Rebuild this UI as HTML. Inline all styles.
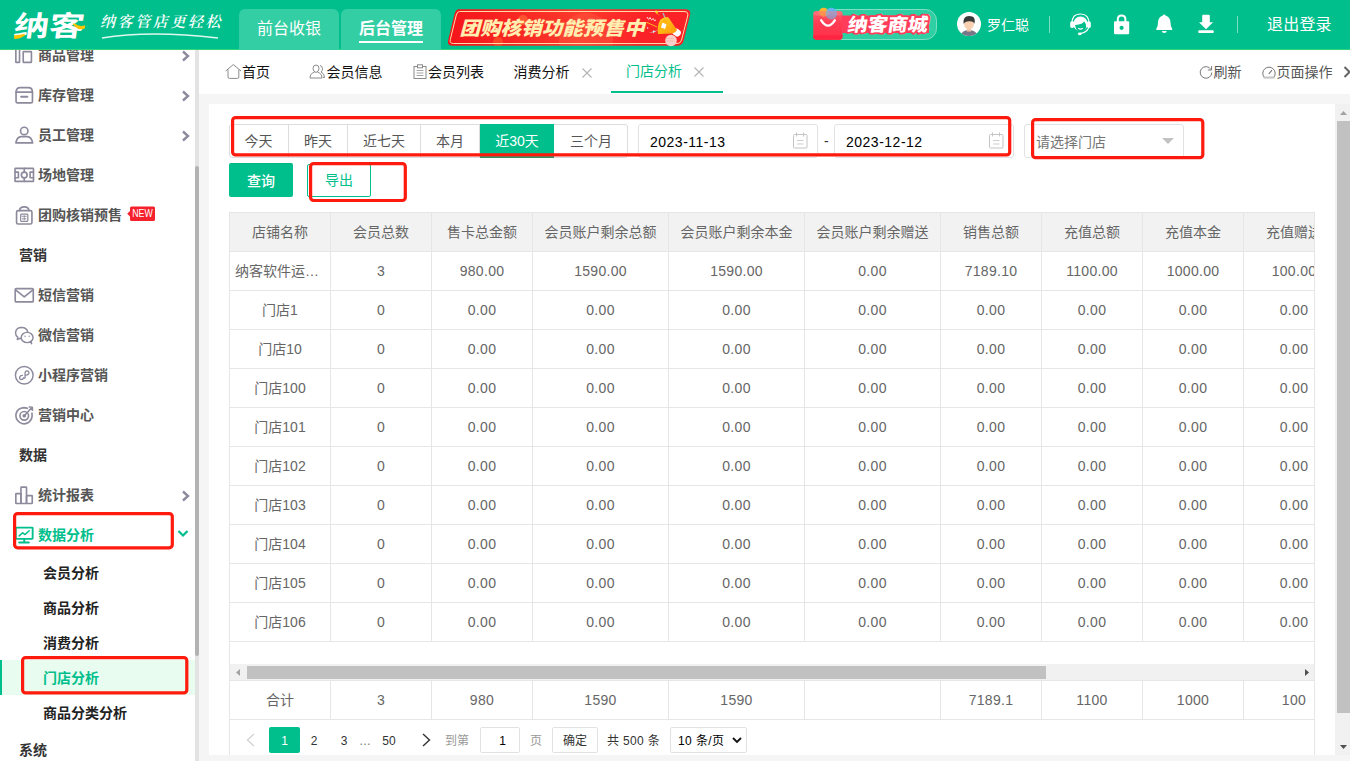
<!DOCTYPE html>
<html lang="zh-CN">
<head>
<meta charset="utf-8">
<title>门店分析</title>
<style>
*{box-sizing:border-box;margin:0;padding:0}
html,body{width:1350px;height:761px;overflow:hidden}
body{font-family:"Liberation Sans","Noto Sans CJK SC",sans-serif;font-size:14px;color:#333;background:#f5f5f5;position:relative}
.abs{position:absolute}
svg{display:block;overflow:visible}
#hd{position:absolute;left:0;top:0;width:1350px;height:50px;background:#00bf8c;border-bottom:1px solid #2fd47c}
.htab{position:absolute;top:9px;width:100px;height:41px;background:#33cea4;border-radius:6px 6px 0 0;color:#fff;font-size:16px;text-align:center;line-height:40px}
#sb{position:absolute;left:0;top:50px;width:195px;height:711px;background:#fff;overflow:hidden}
#sbtrack{position:absolute;left:195px;top:50px;width:4px;height:711px;background:#e3e3e3}
#sbthumb{position:absolute;left:195px;top:166px;width:4px;height:490px;background:#b2b2b2;border-radius:2px}
.mi{position:absolute;left:0;width:195px;height:40px;line-height:40px;font-weight:700;color:#555;font-size:14px}
.mi .t{position:absolute;left:38px;top:0;white-space:nowrap}
.mi .ic{position:absolute;left:13.800px;top:10px;width:20.5px;height:20.5px}
.mi .ar{position:absolute;left:180.5px;top:15px;width:9px;height:12px}
.st{position:absolute;left:19px;height:40px;line-height:40px;font-weight:700;color:#333;font-size:14px}
.si{position:absolute;left:0;width:195px;height:35px;line-height:37px;font-weight:700;color:#222;font-size:14px;padding-left:43px}
.red{position:absolute}
#tb{position:absolute;left:199px;top:50px;width:1151px;height:44px;background:#fff}
.ti{position:absolute;top:50px;height:44px;line-height:44px;font-size:14px;color:#111;white-space:nowrap}
#card{position:absolute;left:209px;top:104px;width:1126px;height:651px;background:#fff}
#vs{position:absolute;left:1335px;top:104px;width:15px;height:651px;background:#f1f1f1}
#tbl{position:absolute;left:229px;top:212px;width:1085px;height:430px;overflow:hidden;border-left:1px solid #e6e6e6;border-top:1px solid #e6e6e6}
.c{position:absolute;height:39px;line-height:38px;border-right:1px solid #e6e6e6;border-bottom:1px solid #e6e6e6;text-align:center;color:#666;font-size:14px;overflow:hidden;padding:0 6px;white-space:nowrap}
.c.h{background:#f2f2f2}
.bg{position:absolute;top:124px;height:33px;line-height:34px;border:1px solid #ddd;border-left:none;background:#fff;color:#555;font-size:14px;text-align:center}
.inp{position:absolute;top:124px;height:34px;border:1px solid #e2e2e2;border-radius:3px;background:#fff;line-height:34px;font-size:14px;color:#000;padding-left:11px;letter-spacing:.5px}
.pg{position:absolute;top:727px;height:26px;line-height:28px;font-size:12px;color:#333;text-align:center;white-space:nowrap}
</style>
</head>
<body>
<div id="hd"></div>
<div class="abs" style="left:14px;top:8px;font-size:28px;line-height:38px;font-weight:700;color:#fff;white-space:nowrap;transform-origin:0 50%;transform:scaleX(1.26) skewX(-6deg);letter-spacing:0">纳客</div>
<svg class="abs" style="left:12px;top:22px" width="76" height="18"><path d="M2 13.200 Q7 13.5 12.5 11.800 L12.800 13.5 Q8 17 2.300 17Z" fill="#ffc400"/><path d="M60.5 1.800 Q62.5 1.200 64 2.300 Q68 5.200 73.200 3.200 L73 6.200 Q70 8 66.5 7 Q63 5.5 60.5 1.800Z" fill="#ffc400"/></svg>
<div class="abs" style="left:100px;top:12px;font-size:15px;line-height:20px;color:#fff;font-style:italic;font-weight:600;letter-spacing:2.6px;font-family:'Liberation Serif','Noto Serif CJK SC',serif">纳客管店更轻松</div>
<svg class="abs" style="left:100px;top:32px" width="120" height="8"><path d="M2 6 Q50 -2 118 6" fill="none" stroke="#dff7ee" stroke-width="1.3"/></svg>
<div class="htab" style="left:239px">前台收银</div>
<div class="htab" style="left:341px;font-weight:700">后台管理</div>
<div class="abs" style="left:359px;top:41px;width:64px;height:2px;background:#fff"></div>
<svg class="abs" style="left:446px;top:8px" width="248" height="40"><defs><linearGradient id="bn" x1="0" x2="1"><stop offset="0" stop-color="#f5141a"/><stop offset=".55" stop-color="#fb3a2c"/><stop offset=".8" stop-color="#fb2227"/><stop offset="1" stop-color="#fb2227"/></linearGradient><linearGradient id="mg" x1="0" y1="0" x2="1" y2="1"><stop offset="0" stop-color="#ffd21f"/><stop offset="1" stop-color="#ff960a"/></linearGradient><clipPath id="bc"><path d="M13 1.200 H239 Q245.5 1.200 244 7 L237.5 33 Q236.300 37.800 231 37.800 H6.5 Q0.800 37.800 2.200 32 L8.5 6 Q9.700 1.200 13 1.200Z"/></clipPath></defs><path d="M13 1.200 H239 Q245.5 1.200 244 7 L237.5 33 Q236.300 37.800 231 37.800 H6.5 Q0.800 37.800 2.200 32 L8.5 6 Q9.700 1.200 13 1.200Z" fill="url(#bn)"/><g clip-path="url(#bc)"><circle cx="77" cy="12" r="5" fill="#ff7a3a" opacity=".55"/><circle cx="145" cy="14" r="4" fill="#ff8a4a" opacity=".55"/><circle cx="52" cy="34" r="5" fill="#ff6a2a" opacity=".5"/><circle cx="140" cy="32" r="27" fill="#ff6a4a" opacity=".3"/></g><path d="M13.5 3.5 H238 Q242.800 3.5 241.700 8 L235.5 32.200 Q234.700 35.5 231 35.5 H7.5 Q3.300 35.5 4.300 31.5 L10.300 7 Q11.200 3.5 13.5 3.5Z" fill="none" stroke="#ffdca6" stroke-width="1"/><text x="13.5" y="27.300" font-size="19" font-weight="900" font-style="italic" fill="#ffeeb0" textLength="185" lengthAdjust="spacingAndGlyphs" font-family="Liberation Sans, Noto Sans CJK SC, sans-serif">团购核销功能预售中</text><g><path d="M201 9 q1.5 4 3 0.5 q1.5 4 3 1 q1.5 3.5 3 1.5" stroke="#fff" stroke-width="1" fill="none" opacity=".9"/><path d="M209 1.5 l3.5 2.5 l-1.5 1 l3 3 l-5 -3.5 l1.5 -1Z" fill="#ffd21f"/><path d="M217 5 l2.5 6" stroke="#9fc3c9" stroke-width="1.200"/><path d="M201 14.5 l10 4.5" stroke="#ffb81f" stroke-width="1"/><path d="M203 25 l4 -1.5 l0.5 -1.5 l1 1 l3 -0.5 l-3 1.5 l-1 1.5 l-0.5 -1.200Z" fill="#cfe8f2"/><circle cx="201.5" cy="20" r=".8" fill="#cfe8f2"/><circle cx="225" cy="32.5" r="5.800" fill="#f9cfc8"/><path d="M220 30.5 h8 M220 33 h8" stroke="#f4b6ae" stroke-width=".8"/><rect x="226.5" y="20.5" width="8.5" height="7" rx="3" transform="rotate(35 230 24)" fill="#fff"/><path d="M214.5 11.5 Q220 8 222.5 9.5 L231 22 Q229.5 25 226.5 25.5 L212 26 Q210.5 18 214.5 11.5Z" fill="url(#mg)"/><ellipse cx="216.5" cy="18.5" rx="3.600" ry="7.5" transform="rotate(22 216.5 18.5)" fill="#ffb40f"/><path d="M216.5 14.5 L220.5 16.5 L219 21 L215 19.5Z" fill="#fff"/></g></svg>
<svg class="abs" style="left:810px;top:4px" width="132" height="40"><defs><linearGradient id="bg1" x1="0" y1="0" x2="0" y2="1"><stop offset="0" stop-color="#ff5d6c"/><stop offset=".45" stop-color="#ff3a52"/><stop offset="1" stop-color="#ff3049"/></linearGradient></defs><rect x="12.5" y="5.5" width="114" height="30" rx="11" fill="#2fcfa4" stroke="#7be0c4" stroke-width="1"/><circle cx="13.700" cy="8.300" r="4.600" fill="#ffb62e"/><circle cx="21.300" cy="9.600" r="5.800" fill="#57b2f5"/><rect x="3.300" y="7" width="29.200" height="28.800" rx="3.5" fill="url(#bg1)"/><rect x="3.300" y="7" width="29.200" height="4.5" rx="2.5" fill="#ff7d86" opacity=".55"/><path d="M3.300 31.200 H32.5 V32.5 Q32.5 35.800 29 35.800 H6.800 Q3.300 35.800 3.300 32.5Z" fill="#ff2440"/><circle cx="13.700" cy="8.300" r="4.600" fill="#ffb62e" opacity=".5"/><circle cx="21.300" cy="9.600" r="5.800" fill="#6db6f0" opacity=".6"/><path d="M3.300 15 H32.5 V13 H3.300Z" fill="#ff4a5c" opacity="0"/><path d="M11.200 16.300 Q18 26.800 24.800 16.300" fill="none" stroke="#fff" stroke-width="2.300" stroke-linecap="round"/><rect x="32" y="11.5" width="87" height="17.5" fill="#ff3d5a"/><g transform="skewX(-9)"><text x="41.300" y="26.700" font-size="18" font-weight="900" fill="#fff" stroke="#ff3d5a" stroke-width="3.5" stroke-linejoin="round" paint-order="stroke" textLength="80" lengthAdjust="spacingAndGlyphs" font-family="Liberation Sans, Noto Sans CJK SC, sans-serif">纳客商城</text></g></svg>
<svg class="abs" style="left:957px;top:12px" width="24" height="24"><defs><clipPath id="av"><circle cx="12" cy="12" r="12"/></clipPath></defs><circle cx="12" cy="12" r="12" fill="#fff"/><g clip-path="url(#av)"><path d="M3.5 25 Q3.5 18.300 12 18.300 Q20.5 18.300 20.5 25Z" fill="#767888"/><rect x="10" y="15" width="4" height="4.5" fill="#f2c4a5"/><ellipse cx="12" cy="11.800" rx="5" ry="5.600" fill="#f8cfb0"/><path d="M6.700 12 Q5.600 4 12 4 Q16 4 17.200 6 Q18.400 8.5 17.300 12 Q16.800 9 12.5 9.200 Q8 9 6.700 12Z" fill="#3a3a3a"/></g></svg>
<div class="abs" style="left:987px;top:15px;font-size:14px;line-height:20px;color:#fff;white-space:nowrap">罗仁聪</div>
<div class="abs" style="left:1049px;top:16px;width:1px;height:17px;background:#7fdcc0"></div>
<div class="abs" style="left:1237px;top:16px;width:1px;height:17px;background:#7fdcc0"></div>
<svg class="abs" style="left:1069.5px;top:12.5px" width="21" height="23" viewBox="0 0 21 23"><path d="M1.800 11 Q1.800 1 10.5 1 Q19.200 1 19.200 11 Q19.200 19.5 10 20.600" fill="none" stroke="#fff" stroke-width="1.200"/><circle cx="10.5" cy="10.800" r="7.300" fill="#fff"/><rect x="0.200" y="8.300" width="3.800" height="6.600" rx="1.600" fill="#fff"/><rect x="17" y="8.300" width="3.800" height="6.600" rx="1.600" fill="#fff"/><path d="M5.100 12 Q9 11.800 12 10.5 Q13.600 9.600 14.100 8.200 Q16.600 11 16.200 14.200 Q15 18.600 10.5 18.600 Q6 18.600 5.100 12Z" fill="#00bf8c"/><path d="M8.300 15.300 Q10.5 17 12.700 15.300" stroke="#fff" stroke-width="1.100" fill="none"/><ellipse cx="9.800" cy="20.800" rx="1.900" ry="1.400" fill="#fff"/></svg>
<svg class="abs" style="left:1113px;top:14px" width="17" height="21" viewBox="0 0 17 21"><path d="M4.800 8 V5.5 Q4.800 1.400 8.600 1.400 Q12.400 1.400 12.400 5.5 V8" fill="none" stroke="#fff" stroke-width="2"/><rect x="1" y="7.300" width="15.200" height="13" rx="1.200" fill="#fff"/><circle cx="8.600" cy="13.800" r="2.100" fill="#00bf8c"/></svg>
<svg class="abs" style="left:1156px;top:14px" width="17" height="20" viewBox="0 0 17 20"><path d="M8.200 0.400 Q9.300 0.400 9.5 1.600 Q14.300 3 14.5 8.5 Q14.5 13 16.200 14.800 V15.900 H0.300 V14.800 Q2 13 2 8.5 Q2.200 3 6.900 1.600 Q7.100 0.400 8.200 0.400Z" fill="#fff"/><path d="M5.800 16.900 H10.800 Q10.5 18.900 8.300 18.900 Q6.100 18.900 5.800 16.900Z" fill="#fff"/></svg>
<svg class="abs" style="left:1198px;top:14px" width="16" height="20" viewBox="0 0 16 20"><path d="M4.200 1.800 Q4.200 0.800 5.200 0.800 H10.800 Q11.800 0.800 11.800 1.800 V8.200 H15 L8 15.300 L1 8.200 H4.200Z" fill="#fff"/><rect x="0.300" y="16.200" width="15.400" height="2.900" rx=".8" fill="#fff"/></svg>
<div class="abs" style="left:1267px;top:14px;font-size:16px;line-height:22px;color:#fff;white-space:nowrap;letter-spacing:.2px">退出登录</div>
<div id="sb">
<div class="mi" style="top:-15px"><svg class="ic" viewBox="0 0 20 20" fill="none" stroke="#8c8a9c" stroke-width="1.600" stroke-linejoin="round" stroke-linecap="round"><rect x="1.800" y="1.5" width="3.600" height="15.5" rx=".5"/><path d="M8.5 2.200 H17.5"/><rect x="9" y="6.5" width="8" height="10.5" rx=".5"/></svg><span class="t">商品管理</span><svg class="ar" viewBox="0 0 9 12"><path d="M2 1.5 L7 6 L2 10.5" fill="none" stroke="#8c8a9c" stroke-width="2.400"/></svg></div>
<div class="mi" style="top:25px"><svg class="ic" viewBox="0 0 20 20" fill="none" stroke="#8c8a9c" stroke-width="1.600" stroke-linejoin="round" stroke-linecap="round"><path d="M2 7 Q2 2.5 6 2.5 H14 Q18 2.5 18 7Z"/><path d="M2 7 V16 Q2 17.5 3.5 17.5 H16.5 Q18 17.5 18 16 V7"/><path d="M7 11.5 H13" stroke-width="2"/></svg><span class="t">库存管理</span><svg class="ar" viewBox="0 0 9 12"><path d="M2 1.5 L7 6 L2 10.5" fill="none" stroke="#8c8a9c" stroke-width="2.400"/></svg></div>
<div class="mi" style="top:65px"><svg class="ic" viewBox="0 0 20 20" fill="none" stroke="#8c8a9c" stroke-width="1.600" stroke-linejoin="round" stroke-linecap="round"><circle cx="10" cy="5.800" r="3.600"/><path d="M1.800 17.5 Q3 11.5 7 11.300 H13 Q17 11.5 18.200 17.5Z"/></svg><span class="t">员工管理</span><svg class="ar" viewBox="0 0 9 12"><path d="M2 1.5 L7 6 L2 10.5" fill="none" stroke="#8c8a9c" stroke-width="2.400"/></svg></div>
<div class="mi" style="top:105px"><svg class="ic" viewBox="0 0 20 20" fill="none" stroke="#8c8a9c" stroke-width="1.600" stroke-linejoin="round" stroke-linecap="round"><rect x="1" y="3.300" width="18" height="12.700" rx=".5"/><circle cx="10" cy="9.700" r="2.800"/><path d="M10 3.300 V6.900 M10 12.5 V16 M1 7 H4.300 V12.400 H1 M19 7 H15.700 V12.400 H19"/></svg><span class="t">场地管理</span></div>
<div class="mi" style="top:145px"><svg class="ic" viewBox="0 0 20 20" fill="none" stroke="#8c8a9c" stroke-width="1.600" stroke-linejoin="round" stroke-linecap="round"><path d="M2.5 7 Q2.5 5.5 4 5.5 H16 Q17.5 5.5 17.5 7 V17 Q17.5 18.5 16 18.5 H4 Q2.5 18.5 2.5 17Z"/><path d="M5.5 5.5 Q5.5 1.800 10 1.800 Q14.5 1.800 14.5 5.5"/><rect x="6.5" y="9" width="7" height="7" rx=".8" stroke-width="1.200"/><path d="M8 11 H12 M10 10.5 V14.5 M8.200 13.5 H11.800" stroke-width=".9"/></svg><span class="t">团购核销预售</span><svg class="abs" style="left:126px;top:11px" width="30" height="17"><path d="M4 2 Q4 0.5 5.5 0.5 H27.5 Q29 0.5 29 2 V13.5 Q29 15 27.5 15 H5.5 Q4 15 4 13.5 V10.5 L1.200 7.800 L4 5Z" fill="#f5222d"/><text x="6.200" y="11.400" font-size="10" fill="#fff" font-family="Liberation Sans,sans-serif" font-weight="400" textLength="20.5" lengthAdjust="spacingAndGlyphs">NEW</text></svg></div>
<div class="st" style="top:185px">营销</div>
<div class="mi" style="top:225px"><svg class="ic" viewBox="0 0 20 20" fill="none" stroke="#8c8a9c" stroke-width="1.600" stroke-linejoin="round" stroke-linecap="round"><rect x="1.200" y="3.5" width="17.600" height="13" rx="1"/><path d="M1.800 5 L10 11.5 L18.200 5"/></svg><span class="t">短信营销</span></div>
<div class="mi" style="top:265px"><svg class="ic" viewBox="0 0 20 20" fill="none" stroke="#8c8a9c" stroke-width="1.600" stroke-linejoin="round" stroke-linecap="round"><path d="M7.5 2.5 Q2 2.5 1.5 7.5 Q1.5 10.5 3.800 12 L3.200 14.200 L5.800 13 Q6.5 13.200 7.300 13.200" stroke-width="1.400"/><path d="M7.5 2.5 Q12.300 2.5 13.5 6.800" stroke-width="1.400"/><ellipse cx="12.800" cy="12.200" rx="5.800" ry="5" stroke-width="1.400"/><path d="M15.800 16.5 L17.300 18.300 L16.800 15.800" stroke-width="1.200"/><circle cx="10.800" cy="11" r=".7" fill="#8c8a9c" stroke="none"/><circle cx="14.800" cy="11" r=".7" fill="#8c8a9c" stroke="none"/></svg><span class="t">微信营销</span></div>
<div class="mi" style="top:305px"><svg class="ic" viewBox="0 0 20 20" fill="none" stroke="#8c8a9c" stroke-width="1.600" stroke-linejoin="round" stroke-linecap="round"><circle cx="10" cy="10" r="8.600" stroke-width="1.400"/><path d="M10.800 7.5 Q11 5.800 12.800 5.800 Q14.800 6 14.5 8 Q14 9.800 11.800 9.800 M9.200 12.5 Q9 14.200 7.200 14.200 Q5.200 14 5.5 12 Q6 10.200 8.200 10.200 M10.800 7.5 V12.5 Q10.5 13 9.200 12.5" stroke-width="1.300"/></svg><span class="t">小程序营销</span></div>
<div class="mi" style="top:345px"><svg class="ic" viewBox="0 0 20 20" fill="none" stroke="#8c8a9c" stroke-width="1.600" stroke-linejoin="round" stroke-linecap="round"><path d="M17.5 8 Q18.5 13.5 14.5 16.800 Q10 19.800 5.5 17 Q1 13.800 2 8.5 Q3.5 3 9.5 2.5 Q11.5 2.5 13 3.200"/><circle cx="10" cy="10.5" r="4.200"/><circle cx="10" cy="10.5" r="1" fill="#8c8a9c"/><path d="M10 10.5 L17.5 2.5 M15 2 L17.800 2.200 L18 5"/></svg><span class="t">营销中心</span></div>
<div class="st" style="top:385px">数据</div>
<div class="mi" style="top:425px"><svg class="ic" viewBox="0 0 20 20" fill="none" stroke="#8c8a9c" stroke-width="1.600" stroke-linejoin="round" stroke-linecap="round"><rect x="1.800" y="8.400" width="5" height="9.700" rx=".5"/><rect x="6.800" y="2.100" width="5.400" height="16" rx=".5"/><rect x="12.200" y="10.400" width="5.600" height="7.700" rx=".5"/></svg><span class="t">统计报表</span><svg class="ar" viewBox="0 0 9 12"><path d="M2 1.5 L7 6 L2 10.5" fill="none" stroke="#8c8a9c" stroke-width="2.400"/></svg></div>
<div class="mi" style="top:465px;color:#00bf8c"><svg class="ic" viewBox="0 0 20 20" fill="none" stroke="#00bf8c" stroke-width="1.600" stroke-linejoin="round" stroke-linecap="round"><rect x="1.800" y="2.5" width="16.400" height="11" rx=".5" stroke-width="1.800"/><path d="M10 13.800 V16.600 M5 17.100 H14.5" stroke-width="1.800"/><path d="M5 10.600 L8.5 7.600 L10.800 9.300 L14.800 5.600" stroke-width="1.5"/></svg><span class="t">数据分析</span><svg class="abs" style="left:177px;top:14px" width="12" height="9" viewBox="0 0 12 9"><path d="M1.5 2 L6 6.5 L10.5 2" fill="none" stroke="#00bf8c" stroke-width="2.200"/></svg></div>
<div class="si" style="top:505px">会员分析</div>
<div class="si" style="top:540px">商品分析</div>
<div class="si" style="top:575px">消费分析</div>
<div class="si" style="top:610px;background:#e8fcef;color:#00bf8c;border-left:2px solid #00bf8c;padding-left:41px">门店分析</div>
<div class="si" style="top:645px">商品分类分析</div>
<div class="st" style="top:680px">系统</div>
</div>
<div id="sbtrack"></div><div id="sbthumb"></div>
<svg class="red" style="left:13.4px;top:512.4px" width="160.9" height="37.4"><rect x="1.6" y="1.6" width="157.7" height="34.2" rx="3" fill="none" stroke="#ff1a0e" stroke-width="3.2"/></svg>
<svg class="red" style="left:21.2px;top:656.2px" width="167.4" height="38.5"><rect x="1.6" y="1.6" width="164.2" height="35.3" rx="3" fill="none" stroke="#ff1a0e" stroke-width="3.2"/></svg>
<div id="tb"></div>
<svg class="abs" style="left:225px;top:64px" width="17" height="15" viewBox="0 0 17 15"><path d="M0.600 7 L8.300 0.600 L16 7" fill="none" stroke="#8a8a8a" stroke-width="1"/><path d="M3 5.5 V13 Q3 14.400 4.400 14.400 H12.400 Q13.800 14.400 13.800 13 V5.5" fill="none" stroke="#8a8a8a" stroke-width="1"/></svg>
<div class="ti" style="left:242px">首页</div>
<svg class="abs" style="left:309px;top:64px" width="17" height="15" viewBox="0 0 17 15"><path d="M7 8.5 Q4 7.5 4 4.5 Q4 1 7 1 Q10 1 10 4.5 Q10 7.5 7 8.5 M5.5 8.200 Q1 9.5 1 14 H13 Q13 9.5 8.5 8.200 M11 1.5 Q13.5 2 13.5 4.800 Q13.5 7 12 8 Q15.5 9.5 15.5 13.5 H14" fill="none" stroke="#8a8a8a" stroke-width="1"/></svg>
<div class="ti" style="left:326.5px">会员信息</div>
<svg class="abs" style="left:413px;top:64px" width="14" height="15" viewBox="0 0 14 15"><rect x="1" y="2.5" width="12" height="12" fill="none" stroke="#8a8a8a" stroke-width="1"/><rect x="4.5" y="0.800" width="5" height="3" fill="#fff" stroke="#8a8a8a" stroke-width="1"/><path d="M3.5 6.5 H10.5 M3.5 9 H10.5 M3.5 11.5 H10.5" stroke="#a5a5a5" stroke-width="1"/></svg>
<div class="ti" style="left:428px">会员列表</div>
<div class="ti" style="left:513.5px">消费分析</div>
<svg class="abs" style="left:582px;top:68px" width="10" height="10"><path d="M.5 .5 L9.5 9.5 M9.5 .5 L.5 9.5" stroke="#b4b4b4" stroke-width="1.100"/></svg>
<div class="ti" style="left:626px;color:#00bf8c;top:49px">门店分析</div>
<svg class="abs" style="left:694px;top:67px" width="10" height="10"><path d="M.5 .5 L9.5 9.5 M9.5 .5 L.5 9.5" stroke="#b4b4b4" stroke-width="1.100"/></svg>
<div class="abs" style="left:611px;top:91px;width:112px;height:2px;background:#00bf8c"></div>
<svg class="abs" style="left:1199px;top:65px" width="14" height="14" viewBox="0 0 14 14"><path d="M12 4.5 A5.800 5.800 0 1 0 12.800 7.5" fill="none" stroke="#777" stroke-width="1"/><path d="M12.600 1 V5 H8.800" fill="none" stroke="#777" stroke-width="1"/></svg>
<div class="ti" style="left:1213.5px;color:#555">刷新</div>
<svg class="abs" style="left:1262px;top:65.5px" width="14" height="13" viewBox="0 0 14 13"><path d="M2.200 11.300 A6.200 6.200 0 1 1 11.800 11.300 Z" fill="none" stroke="#777" stroke-width="1"/><path d="M6.800 7.800 L10 4.200" stroke="#777" stroke-width="1.100"/><path d="M1.5 11.800 H12.5" stroke="#c4c4c4" stroke-width="1.600"/></svg>
<div class="ti" style="left:1276.5px;color:#555">页面操作</div>
<svg class="abs" style="left:1343px;top:66px" width="8" height="12"><path d="M1.5 1 L6.5 6 L1.5 11" fill="none" stroke="#666" stroke-width="2.100"/></svg>
<div id="card"></div>
<div id="vs"></div>
<div class="abs" style="left:1337px;top:121px;width:13px;height:592px;background:#c1c1c1"></div>
<svg class="abs" style="left:1340px;top:111px" width="7" height="4"><path d="M0 4 L3.5 0 L7 4Z" fill="#a3a3a3"/></svg>
<svg class="abs" style="left:1340px;top:744.5px" width="7" height="4"><path d="M0 0 L3.5 4 L7 0Z" fill="#505050"/></svg>
<div class="abs" style="left:229px;top:124px;width:399px;height:34px;border:1px solid #ddd;border-radius:3px;background:#fff"></div>
<div class="abs" style="left:229px;top:125px;width:60px;height:32px;line-height:32px;border-right:1px solid #ddd;color:#555;text-align:center;font-size:14px">今天</div>
<div class="abs" style="left:289px;top:125px;width:59px;height:32px;line-height:32px;border-right:1px solid #ddd;color:#555;text-align:center;font-size:14px">昨天</div>
<div class="abs" style="left:348px;top:125px;width:73px;height:32px;line-height:32px;border-right:1px solid #ddd;color:#555;text-align:center;font-size:14px">近七天</div>
<div class="abs" style="left:421px;top:125px;width:59px;height:32px;line-height:32px;border-right:1px solid #ddd;color:#555;text-align:center;font-size:14px">本月</div>
<div class="abs" style="left:480px;top:124px;width:74px;height:34px;line-height:34px;background:#00bf8c;color:#fff;text-align:center;font-size:14px;border-bottom:1px solid #3c8a5c">近30天</div>
<div class="abs" style="left:554px;top:125px;width:74px;height:32px;line-height:32px;color:#555;text-align:center;font-size:14px">三个月</div>
<div class="inp" style="left:638px;width:180px">2023-11-13</div>
<svg class="abs" style="left:792.5px;top:131.5px" width="15" height="17" viewBox="0 0 15 17"><rect x=".5" y="2.5" width="13.5" height="13.5" rx="1" fill="none" stroke="#c4c4c4" stroke-width="1"/><path d="M3.5 .5 V4.5 M10.5 .5 V4.5" stroke="#c4c4c4" stroke-width="1"/><path d="M4 8.5 H10.5 M4 12 H10.5" stroke="#cdcdcd" stroke-width="1"/></svg>
<div class="abs" style="left:824px;top:124px;line-height:34px;font-size:14px;color:#333">-</div>
<div class="inp" style="left:834px;width:180px">2023-12-12</div>
<svg class="abs" style="left:988.5px;top:131.5px" width="15" height="17" viewBox="0 0 15 17"><rect x=".5" y="2.5" width="13.5" height="13.5" rx="1" fill="none" stroke="#c4c4c4" stroke-width="1"/><path d="M3.5 .5 V4.5 M10.5 .5 V4.5" stroke="#c4c4c4" stroke-width="1"/><path d="M4 8.5 H10.5 M4 12 H10.5" stroke="#cdcdcd" stroke-width="1"/></svg>
<div class="inp" style="left:1024px;width:160px;color:#757575;letter-spacing:0">请选择门店</div>
<svg class="abs" style="left:1162px;top:138px" width="12" height="6"><path d="M0 0 H12 L6 6Z" fill="#c2c2c2"/></svg>
<svg class="red" style="left:231.4px;top:116.2px" width="780.3" height="40.5"><rect x="1.6" y="1.6" width="777.1" height="37.3" rx="3" fill="none" stroke="#ff1a0e" stroke-width="3.2"/></svg>
<svg class="red" style="left:1031.4px;top:118.3px" width="173.4" height="41.3"><rect x="1.6" y="1.6" width="170.2" height="38.1" rx="3" fill="none" stroke="#ff1a0e" stroke-width="3.2"/></svg>
<div class="abs" style="left:229px;top:163px;width:64px;height:34px;line-height:34px;background:#00bf8c;border-radius:2px;color:#fff;font-size:14px;font-weight:500;text-align:center;border-top:1px solid #00b680">查询</div>
<div class="abs" style="left:307px;top:164px;width:64px;height:33px;line-height:31px;background:#fff;border:1px solid #00bf8c;border-radius:2px;color:#00bf8c;font-size:14px;text-align:center">导出</div>
<svg class="red" style="left:308.6px;top:161.6px" width="97.9" height="40.1"><rect x="1.6" y="1.6" width="94.7" height="36.9" rx="3" fill="none" stroke="#ff1a0e" stroke-width="3.2"/></svg>
<div id="tbl">
<div class="c h" style="left:0px;top:0px;width:101px;">店铺名称</div>
<div class="c h" style="left:101px;top:0px;width:101px;">会员总数</div>
<div class="c h" style="left:202px;top:0px;width:101px;">售卡总金额</div>
<div class="c h" style="left:303px;top:0px;width:136px;">会员账户剩余总额</div>
<div class="c h" style="left:439px;top:0px;width:136px;">会员账户剩余本金</div>
<div class="c h" style="left:575px;top:0px;width:136px;">会员账户剩余赠送</div>
<div class="c h" style="left:711px;top:0px;width:101px;">销售总额</div>
<div class="c h" style="left:812px;top:0px;width:101px;">充值总额</div>
<div class="c h" style="left:913px;top:0px;width:101px;">充值本金</div>
<div class="c h" style="left:1014px;top:0px;width:101px;">充值赠送</div>
<div class="c" style="left:0px;top:39px;width:101px;text-align:left;text-overflow:ellipsis;padding-left:5px;">纳客软件运营中心</div>
<div class="c" style="left:101px;top:39px;width:101px;">3</div>
<div class="c" style="left:202px;top:39px;width:101px;letter-spacing:.3px;">980.00</div>
<div class="c" style="left:303px;top:39px;width:136px;letter-spacing:.3px;">1590.00</div>
<div class="c" style="left:439px;top:39px;width:136px;letter-spacing:.3px;">1590.00</div>
<div class="c" style="left:575px;top:39px;width:136px;letter-spacing:.3px;">0.00</div>
<div class="c" style="left:711px;top:39px;width:101px;letter-spacing:.3px;">7189.10</div>
<div class="c" style="left:812px;top:39px;width:101px;letter-spacing:.3px;">1100.00</div>
<div class="c" style="left:913px;top:39px;width:101px;letter-spacing:.3px;">1000.00</div>
<div class="c" style="left:1014px;top:39px;width:101px;letter-spacing:.3px;">100.00</div>
<div class="c" style="left:0px;top:78px;width:101px;">门店1</div>
<div class="c" style="left:101px;top:78px;width:101px;">0</div>
<div class="c" style="left:202px;top:78px;width:101px;letter-spacing:.3px;">0.00</div>
<div class="c" style="left:303px;top:78px;width:136px;letter-spacing:.3px;">0.00</div>
<div class="c" style="left:439px;top:78px;width:136px;letter-spacing:.3px;">0.00</div>
<div class="c" style="left:575px;top:78px;width:136px;letter-spacing:.3px;">0.00</div>
<div class="c" style="left:711px;top:78px;width:101px;letter-spacing:.3px;">0.00</div>
<div class="c" style="left:812px;top:78px;width:101px;letter-spacing:.3px;">0.00</div>
<div class="c" style="left:913px;top:78px;width:101px;letter-spacing:.3px;">0.00</div>
<div class="c" style="left:1014px;top:78px;width:101px;letter-spacing:.3px;">0.00</div>
<div class="c" style="left:0px;top:117px;width:101px;">门店10</div>
<div class="c" style="left:101px;top:117px;width:101px;">0</div>
<div class="c" style="left:202px;top:117px;width:101px;letter-spacing:.3px;">0.00</div>
<div class="c" style="left:303px;top:117px;width:136px;letter-spacing:.3px;">0.00</div>
<div class="c" style="left:439px;top:117px;width:136px;letter-spacing:.3px;">0.00</div>
<div class="c" style="left:575px;top:117px;width:136px;letter-spacing:.3px;">0.00</div>
<div class="c" style="left:711px;top:117px;width:101px;letter-spacing:.3px;">0.00</div>
<div class="c" style="left:812px;top:117px;width:101px;letter-spacing:.3px;">0.00</div>
<div class="c" style="left:913px;top:117px;width:101px;letter-spacing:.3px;">0.00</div>
<div class="c" style="left:1014px;top:117px;width:101px;letter-spacing:.3px;">0.00</div>
<div class="c" style="left:0px;top:156px;width:101px;">门店100</div>
<div class="c" style="left:101px;top:156px;width:101px;">0</div>
<div class="c" style="left:202px;top:156px;width:101px;letter-spacing:.3px;">0.00</div>
<div class="c" style="left:303px;top:156px;width:136px;letter-spacing:.3px;">0.00</div>
<div class="c" style="left:439px;top:156px;width:136px;letter-spacing:.3px;">0.00</div>
<div class="c" style="left:575px;top:156px;width:136px;letter-spacing:.3px;">0.00</div>
<div class="c" style="left:711px;top:156px;width:101px;letter-spacing:.3px;">0.00</div>
<div class="c" style="left:812px;top:156px;width:101px;letter-spacing:.3px;">0.00</div>
<div class="c" style="left:913px;top:156px;width:101px;letter-spacing:.3px;">0.00</div>
<div class="c" style="left:1014px;top:156px;width:101px;letter-spacing:.3px;">0.00</div>
<div class="c" style="left:0px;top:195px;width:101px;">门店101</div>
<div class="c" style="left:101px;top:195px;width:101px;">0</div>
<div class="c" style="left:202px;top:195px;width:101px;letter-spacing:.3px;">0.00</div>
<div class="c" style="left:303px;top:195px;width:136px;letter-spacing:.3px;">0.00</div>
<div class="c" style="left:439px;top:195px;width:136px;letter-spacing:.3px;">0.00</div>
<div class="c" style="left:575px;top:195px;width:136px;letter-spacing:.3px;">0.00</div>
<div class="c" style="left:711px;top:195px;width:101px;letter-spacing:.3px;">0.00</div>
<div class="c" style="left:812px;top:195px;width:101px;letter-spacing:.3px;">0.00</div>
<div class="c" style="left:913px;top:195px;width:101px;letter-spacing:.3px;">0.00</div>
<div class="c" style="left:1014px;top:195px;width:101px;letter-spacing:.3px;">0.00</div>
<div class="c" style="left:0px;top:234px;width:101px;">门店102</div>
<div class="c" style="left:101px;top:234px;width:101px;">0</div>
<div class="c" style="left:202px;top:234px;width:101px;letter-spacing:.3px;">0.00</div>
<div class="c" style="left:303px;top:234px;width:136px;letter-spacing:.3px;">0.00</div>
<div class="c" style="left:439px;top:234px;width:136px;letter-spacing:.3px;">0.00</div>
<div class="c" style="left:575px;top:234px;width:136px;letter-spacing:.3px;">0.00</div>
<div class="c" style="left:711px;top:234px;width:101px;letter-spacing:.3px;">0.00</div>
<div class="c" style="left:812px;top:234px;width:101px;letter-spacing:.3px;">0.00</div>
<div class="c" style="left:913px;top:234px;width:101px;letter-spacing:.3px;">0.00</div>
<div class="c" style="left:1014px;top:234px;width:101px;letter-spacing:.3px;">0.00</div>
<div class="c" style="left:0px;top:273px;width:101px;">门店103</div>
<div class="c" style="left:101px;top:273px;width:101px;">0</div>
<div class="c" style="left:202px;top:273px;width:101px;letter-spacing:.3px;">0.00</div>
<div class="c" style="left:303px;top:273px;width:136px;letter-spacing:.3px;">0.00</div>
<div class="c" style="left:439px;top:273px;width:136px;letter-spacing:.3px;">0.00</div>
<div class="c" style="left:575px;top:273px;width:136px;letter-spacing:.3px;">0.00</div>
<div class="c" style="left:711px;top:273px;width:101px;letter-spacing:.3px;">0.00</div>
<div class="c" style="left:812px;top:273px;width:101px;letter-spacing:.3px;">0.00</div>
<div class="c" style="left:913px;top:273px;width:101px;letter-spacing:.3px;">0.00</div>
<div class="c" style="left:1014px;top:273px;width:101px;letter-spacing:.3px;">0.00</div>
<div class="c" style="left:0px;top:312px;width:101px;">门店104</div>
<div class="c" style="left:101px;top:312px;width:101px;">0</div>
<div class="c" style="left:202px;top:312px;width:101px;letter-spacing:.3px;">0.00</div>
<div class="c" style="left:303px;top:312px;width:136px;letter-spacing:.3px;">0.00</div>
<div class="c" style="left:439px;top:312px;width:136px;letter-spacing:.3px;">0.00</div>
<div class="c" style="left:575px;top:312px;width:136px;letter-spacing:.3px;">0.00</div>
<div class="c" style="left:711px;top:312px;width:101px;letter-spacing:.3px;">0.00</div>
<div class="c" style="left:812px;top:312px;width:101px;letter-spacing:.3px;">0.00</div>
<div class="c" style="left:913px;top:312px;width:101px;letter-spacing:.3px;">0.00</div>
<div class="c" style="left:1014px;top:312px;width:101px;letter-spacing:.3px;">0.00</div>
<div class="c" style="left:0px;top:351px;width:101px;">门店105</div>
<div class="c" style="left:101px;top:351px;width:101px;">0</div>
<div class="c" style="left:202px;top:351px;width:101px;letter-spacing:.3px;">0.00</div>
<div class="c" style="left:303px;top:351px;width:136px;letter-spacing:.3px;">0.00</div>
<div class="c" style="left:439px;top:351px;width:136px;letter-spacing:.3px;">0.00</div>
<div class="c" style="left:575px;top:351px;width:136px;letter-spacing:.3px;">0.00</div>
<div class="c" style="left:711px;top:351px;width:101px;letter-spacing:.3px;">0.00</div>
<div class="c" style="left:812px;top:351px;width:101px;letter-spacing:.3px;">0.00</div>
<div class="c" style="left:913px;top:351px;width:101px;letter-spacing:.3px;">0.00</div>
<div class="c" style="left:1014px;top:351px;width:101px;letter-spacing:.3px;">0.00</div>
<div class="c" style="left:0px;top:390px;width:101px;">门店106</div>
<div class="c" style="left:101px;top:390px;width:101px;">0</div>
<div class="c" style="left:202px;top:390px;width:101px;letter-spacing:.3px;">0.00</div>
<div class="c" style="left:303px;top:390px;width:136px;letter-spacing:.3px;">0.00</div>
<div class="c" style="left:439px;top:390px;width:136px;letter-spacing:.3px;">0.00</div>
<div class="c" style="left:575px;top:390px;width:136px;letter-spacing:.3px;">0.00</div>
<div class="c" style="left:711px;top:390px;width:101px;letter-spacing:.3px;">0.00</div>
<div class="c" style="left:812px;top:390px;width:101px;letter-spacing:.3px;">0.00</div>
<div class="c" style="left:913px;top:390px;width:101px;letter-spacing:.3px;">0.00</div>
<div class="c" style="left:1014px;top:390px;width:101px;letter-spacing:.3px;">0.00</div>
</div>
<div class="abs" style="left:229px;top:664px;width:1085px;height:17px;background:#f1f1f1"></div>
<div class="abs" style="left:247px;top:666px;width:799px;height:13px;background:#c1c1c1"></div>
<svg class="abs" style="left:236px;top:669px" width="4" height="7"><path d="M4 0 L0 3.5 L4 7Z" fill="#a3a3a3"/></svg>
<svg class="abs" style="left:1305px;top:669px" width="4" height="7"><path d="M0 0 L4 3.5 L0 7Z" fill="#505050"/></svg>
<div class="abs" style="left:229px;top:680px;width:1085px;height:40px;overflow:hidden;border-left:1px solid #e6e6e6;border-top:1px solid #e6e6e6">
<div class="c" style="left:0px;top:0;width:101px;">合计</div>
<div class="c" style="left:101px;top:0;width:101px;">3</div>
<div class="c" style="left:202px;top:0;width:101px;letter-spacing:.3px;">980</div>
<div class="c" style="left:303px;top:0;width:136px;letter-spacing:.3px;">1590</div>
<div class="c" style="left:439px;top:0;width:136px;letter-spacing:.3px;">1590</div>
<div class="c" style="left:575px;top:0;width:136px;"></div>
<div class="c" style="left:711px;top:0;width:101px;letter-spacing:.3px;">7189.1</div>
<div class="c" style="left:812px;top:0;width:101px;letter-spacing:.3px;">1100</div>
<div class="c" style="left:913px;top:0;width:101px;letter-spacing:.3px;">1000</div>
<div class="c" style="left:1014px;top:0;width:101px;letter-spacing:.3px;">100</div>
</div>
<div class="abs" style="left:229px;top:642px;width:1px;height:113px;background:#e6e6e6"></div>
<div class="abs" style="left:1314px;top:212px;width:1px;height:543px;background:#e6e6e6"></div>
<svg class="abs" style="left:246px;top:733px" width="9" height="14"><path d="M8 1 L1.5 7 L8 13" fill="none" stroke="#d2d2d2" stroke-width="1.300"/></svg>
<div class="pg" style="left:269px;width:31px;background:#00bf8c;color:#fff;border-radius:2px">1</div>
<div class="pg" style="left:304px;width:20px">2</div>
<div class="pg" style="left:334px;width:20px">3</div>
<div class="pg" style="left:355px;width:20px;color:#777">…</div>
<div class="pg" style="left:376px;width:26px">50</div>
<svg class="abs" style="left:422px;top:733px" width="9" height="14"><path d="M1 1 L7.5 7 L1 13" fill="none" stroke="#333" stroke-width="1.400"/></svg>
<div class="pg" style="left:445px;color:#999">到第</div>
<div class="pg" style="left:480px;width:40px;border:1px solid #e2e2e2;border-radius:2px;line-height:27px;background:#fff;color:#000;padding-left:5px">1</div>
<div class="pg" style="left:530px;color:#999">页</div>
<div class="pg" style="left:552px;width:46px;border:1px solid #e2e2e2;border-radius:2px;line-height:27px;background:#fff;color:#333">确定</div>
<div class="pg" style="left:607px;color:#333;line-height:29px;letter-spacing:.35px">共 500 条</div>
<div class="pg" style="left:670px;width:77px;border:1px solid #e2e2e2;border-radius:2px;line-height:27px;background:#fff;color:#000;text-align:left;padding-left:7px;letter-spacing:.4px">10 条/页</div>
<svg class="abs" style="left:732px;top:737px" width="10" height="7"><path d="M1 1 L5 5 L9 1" fill="none" stroke="#111" stroke-width="1.800"/></svg>
</body>
</html>
